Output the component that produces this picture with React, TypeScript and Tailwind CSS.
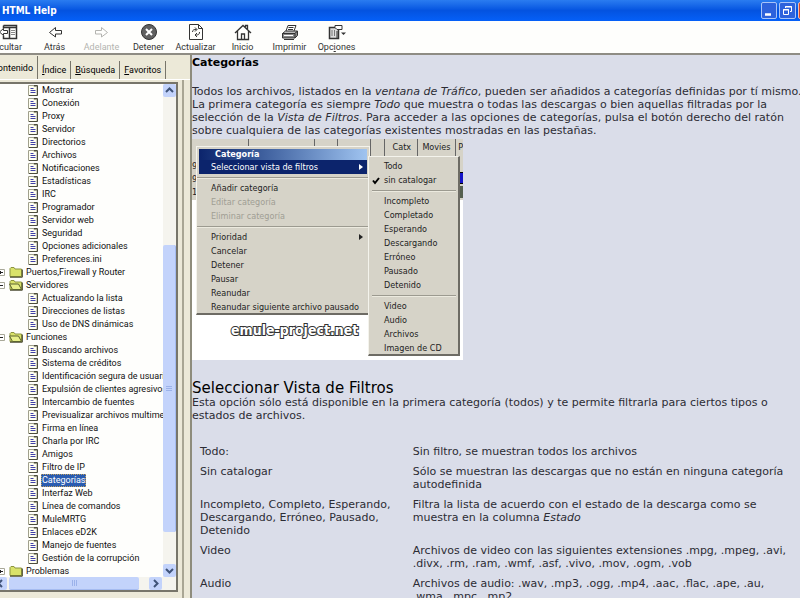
import React from "react";

type TreeItem = {
  label: string;
  kind: "page" | "closed" | "open";
  selected?: boolean;
};

const page = (label: string): TreeItem => ({ label, kind: "page" });

const tree: TreeItem[] = [
  page("Mostrar"),
  page("Conexión"),
  page("Proxy"),
  page("Servidor"),
  page("Directorios"),
  page("Archivos"),
  page("Notificaciones"),
  page("Estadísticas"),
  page("IRC"),
  page("Programador"),
  page("Servidor web"),
  page("Seguridad"),
  page("Opciones adicionales"),
  page("Preferences.ini"),
  { label: "Puertos,Firewall y Router", kind: "closed" },
  { label: "Servidores", kind: "open" },
  page("Actualizando la lista"),
  page("Direcciones de listas"),
  page("Uso de DNS dinámicas"),
  { label: "Funciones", kind: "open" },
  page("Buscando archivos"),
  page("Sistema de créditos"),
  page("Identificación segura de usuarios"),
  page("Expulsión de clientes agresivos"),
  page("Intercambio de fuentes"),
  page("Previsualizar archivos multimedia"),
  page("Firma en línea"),
  page("Charla por IRC"),
  page("Amigos"),
  page("Filtro de IP"),
  { label: "Categorías", kind: "page", selected: true },
  page("Interfaz Web"),
  page("Línea de comandos"),
  page("MuleMRTG"),
  page("Enlaces eD2K"),
  page("Manejo de fuentes"),
  page("Gestión de la corrupción"),
  { label: "Problemas", kind: "closed" },
];

function PageIcon() {
  return (
    <svg className="w-3 h-3 shrink-0" viewBox="0 0 12 12">
      <path d="M.5 1.500h5.500v1h3v9H.5z" fill="#fffff0" stroke="#a0a08c" />
      <path d="M6 1.500h3.500v10H1" fill="none" stroke="#4c4c3c" />
      <path d="M2.500 4.500h3M2.500 6.500h5M2.500 8.500h5" stroke="#4040a8" />
    </svg>
  );
}

function FolderIcon({ open }: { open: boolean }) {
  return (
    <svg className="w-[14px] h-3 shrink-0" viewBox="0 0 14 12">
      <path d="M1 10.5V2.5l1-1h3l1 1.5h6.5v7.5z" fill="#d9e26a" stroke="#8c9440" />
      <path d="M1 11.2h12.3V3.5" fill="none" stroke="#3c3c20" />
      {open && (
        <path d="M.5 5h9l3 5.5H3.5z" fill="#e8f08a" stroke="#5c6430" />
      )}
    </svg>
  );
}

function Expander({ open }: { open: boolean }) {
  return (
    <svg className="w-[5px] h-[9px] shrink-0" viewBox="0 0 5 9">
      <path d="M0 1.5h4.5v6H0" fill="#fff" stroke="#a8a898" />
      <path d="M0 4.5h3" stroke="#222" />
      {!open && <path d="M.5 3v3" stroke="#222" />}
    </svg>
  );
}

function TreeRow({ item }: { item: TreeItem }) {
  if (item.kind === "page") {
    return (
      <li className="flex items-center h-[13px] pl-7 whitespace-nowrap">
        <PageIcon />
        <a
          href="#"
          className={
            item.selected
              ? "ml-px px-px leading-[13px] bg-[#2a5cb0] text-white outline outline-dotted outline-1 -outline-offset-1 outline-[#c0a060]"
              : "ml-px px-px leading-[13px]"
          }
        >
          {item.label}
        </a>
      </li>
    );
  }
  const open = item.kind === "open";
  return (
    <li className="flex items-center h-[13px] whitespace-nowrap">
      <Expander open={open} />
      <span className="w-1" />
      <FolderIcon open={open} />
      <a href="#" className="ml-[3px] leading-[13px]">
        {item.label}
      </a>
    </li>
  );
}

const arrows = {
  up: "M3 8l3.5-3.5L10 8",
  down: "M3 5l3.5 3.5L10 5",
  left: "M8 3L4.500 6.500 8 10",
  right: "M5 3l3.500 3.500L5 10",
};

function ScrollButton({ dir }: { dir: keyof typeof arrows }) {
  return (
    <button
      aria-label={dir}
      className="w-[13px] h-[13px] shrink-0 rounded-xs bg-[#c3d3fb]"
    >
      <svg viewBox="0 0 13 13">
        <path d={arrows[dir]} fill="none" stroke="#3f5378" strokeWidth="2" />
      </svg>
    </button>
  );
}

function Sidebar() {
  return (
    <aside className="flex flex-col w-[192px] shrink-0 bg-[#ece9d8] border-r-2 border-[#8e8c7c] font-[Roboto,sans-serif] text-[9px]">
      <div className="flex items-end h-6 leading-4" role="tablist">
        <button className="h-[23px] -ml-2 pr-1 pt-0.5 border-r border-[#77756a]">
          Contenido
        </button>
        <button className="h-[18px] px-1 border-r border-[#77756a]">
          <u>Í</u>ndice
        </button>
        <button className="h-[18px] px-1 border-r border-[#77756a]">
          <u>B</u>úsqueda
        </button>
        <button className="h-[18px] px-1 border-r border-[#77756a]">
          <u>F</u>avoritos
        </button>
      </div>
      <div className="flex grow min-h-0 border-t border-white">
        <div className="flex flex-col grow min-w-0 pt-0.5 pr-1 pb-1.5 border-r-2 border-[#a9a694]">
          <div className="flex flex-col grow min-h-0 border-t-2 border-r-2 border-b-2 border-[#77756a] bg-[#fefefc]">
            <div className="flex grow min-h-0">
              <ul className="grow min-w-0 overflow-hidden text-[#111]">
                {tree.map((item) => (
                  <TreeRow key={item.label} item={item} />
                ))}
              </ul>
              <div className="flex flex-col w-[13px] shrink-0 bg-[#f5f4ee]">
                <ScrollButton dir="up" />
                <div className="grow-[150]" />
                <div className="flex flex-col items-center justify-center gap-px grow-[285] rounded-xs bg-[#c3d3fb] border-r border-[#a5bbf0]">
                  <span className="w-1.5 h-px bg-[#9bb2ea]" />
                  <span className="w-1.5 h-px bg-[#9bb2ea]" />
                  <span className="w-1.5 h-px bg-[#9bb2ea]" />
                </div>
                <div className="grow-[32]" />
                <ScrollButton dir="down" />
              </div>
            </div>
            <div className="flex h-[13px] shrink-0 pr-[14px] bg-[#f5f4ee]">
              <span className="-ml-1.5 flex">
                <ScrollButton dir="left" />
              </span>
              <div className="flex items-center justify-center gap-px grow-[130] ml-0.5 rounded-xs bg-[#c3d3fb] border-b border-[#a5bbf0]">
                <span className="w-px h-1.5 bg-[#9bb2ea]" />
                <span className="w-px h-1.5 bg-[#9bb2ea]" />
                <span className="w-px h-1.5 bg-[#9bb2ea]" />
              </div>
              <div className="grow-[10]" />
              <ScrollButton dir="right" />
            </div>
          </div>
        </div>
        <div className="w-1.5 shrink-0" />
      </div>
    </aside>
  );
}

function ToolButton({
  label,
  disabled,
  children,
}: {
  label: React.ReactNode;
  disabled?: boolean;
  children: React.ReactNode;
}) {
  return (
    <button
      disabled={disabled}
      className={
        disabled
          ? "flex flex-col items-center w-[47px] shrink-0 text-[#b4b4b0]"
          : "flex flex-col items-center w-[47px] shrink-0 text-[#333]"
      }
    >
      <svg
        className="w-5 h-[18px]"
        viewBox="0 0 20 18"
        fill="none"
        stroke="currentColor"
      >
        {children}
      </svg>
      <span className="leading-3">{label}</span>
    </button>
  );
}

function Toolbar() {
  return (
    <nav className="flex h-[34px] shrink-0 -ml-4 pt-0.5 bg-[#fefefc] border-b-2 border-[#8e8c84] overflow-hidden font-[Roboto,sans-serif] text-[9px]">
      <ToolButton label="Ocultar">
        <path d="M5.500 2.500h13v13h-13v-3M5.500 5.500v-3M5 4.500h13M11.500 4v11" strokeWidth="1.500" />
        <path d="M13 7.500h4M13 9.500h4M13 11.500h4" stroke="#888" />
        <path d="M9.500 7.500h-4v-2l-4 3.500 4 3.500v-2h4z" fill="#fff" />
      </ToolButton>
      <ToolButton label="Atrás">
        <path d="M16.500 7.500h-6v-3L4.500 9.500l6 4.500v-3h6z" />
      </ToolButton>
      <ToolButton label="Adelante" disabled>
        <path d="M3.500 7.500h6v-3l6 5-6 4.500v-3h-6z" />
      </ToolButton>
      <ToolButton label="Detener">
        <circle cx="10" cy="9" r="7.500" fill="#606060" />
        <path d="M7 6l6 6M13 6l-6 6" stroke="#fff" strokeWidth="2" />
      </ToolButton>
      <ToolButton label="Actualizar">
        <path d="M3.500 1.500h9l4 4v11h-13zM12.500 1.500v4h4" />
        <path d="M6.500 9c0-2.500 2-2.500 4-2.500M9 4.500l2 2-2 2M13.500 9c0 3-2 3-4 3M11 10l-2 2 2 2" />
      </ToolButton>
      <ToolButton label="Inicio">
        <path d="M2 10l8-7.500 8 7.500M4.500 8v8.500h11V8M14.500 6V2.500h-2V4M8.500 16v-5h3v5" strokeWidth="1.300" />
      </ToolButton>
      <ToolButton label="Imprimir">
        <path d="M6 8l2-5.500h8L14 8" fill="#fff" />
        <path d="M8.500 4.500h5M8 6.500h5" />
        <path d="M2.500 10.500L5.500 8h12l-2.500 2.500z" fill="#bbb" />
        <path d="M2.500 10.500h12.500v4.500H2.500zM15 10.500L17.500 8v4.500L15 15" fill="#888" />
        <path d="M4 12.500h9" stroke="#fff" />
        <path d="M4 16.500h10" />
      </ToolButton>
      <ToolButton
        label={
          <>
            Opc<u>i</u>ones
          </>
        }
      >
        <path d="M2.500 4.500h9v11h-9z" fill="#ddd" strokeWidth="1.500" />
        <path d="M5 7v6M7.500 7v6" stroke="#777" />
        <path d="M8 2.500h7v4h-5L8 4.500z" fill="#fff" />
        <path d="M10 8v7" />
        <path d="M14 9.500h5l-2.500 2.500z" fill="currentColor" stroke="none" />
      </ToolButton>
    </nav>
  );
}

function TitleBar() {
  return (
    <header className="flex items-center justify-between h-[21px] shrink-0 pl-0.5 overflow-hidden bg-linear-to-b from-[#2a7cf0] via-[#0453e0] to-[#0560f8] text-white">
      <h1 className="font-['DejaVu_Sans_Condensed'] text-[10px] font-bold">
        HTML Help
      </h1>
      <div className="flex gap-0.5 -mr-[14px]">
        <button
          aria-label="Minimizar"
          className="w-4 h-[17px] rounded-xs border border-[#a8c4f8] bg-[#2d62dc]"
        >
          <svg viewBox="0 0 14 15">
            <path d="M3 11.500h6" stroke="#fff" strokeWidth="2.500" />
          </svg>
        </button>
        <button
          aria-label="Restaurar"
          className="w-[17px] h-[17px] rounded-xs border border-[#a8c4f8] bg-[#2d62dc]"
        >
          <svg viewBox="0 0 15 15" fill="none" stroke="#fff">
            <path d="M5.500 5V3.500h6v5H10M5 4h7" />
            <path d="M3.500 6.500h5v5h-5zM3 7h6" />
          </svg>
        </button>
        <button
          aria-label="Cerrar"
          className="w-4 h-[17px] rounded-xs border border-[#f0c0b0] bg-[#d8482c]"
        />
      </div>
    </header>
  );
}

const separator =
  "h-[2px] mt-[3px] mb-0.5 -mx-0.5 border-t border-[#9c9a90] border-b border-b-[#eceadf]";

function MenuScreenshot() {
  return (
    <figure className="relative w-[271px] h-[221px] mt-0.5 overflow-hidden bg-white text-[#222] font-['DejaVu_Sans_Condensed'] text-[9px]">
      <div className="flex h-[17px] bg-[#d6d3c8] leading-[17px]">
        <span className="w-[57px] border-r border-[#666]" />
        <span className="w-[67px] border-r border-[#666]" />
        <span className="w-[23px] border-r border-[#666]" />
        <span className="w-[33px] border-r border-[#666]" />
        <span className="w-[14px] border-r border-[#666]" />
        <span className="w-[34px] pl-2 border-r border-[#666]">Catx</span>
        <span className="w-[38px] pl-1 border-r border-[#666]">Movies</span>
        <span className="pl-0.5">P</span>
      </div>
      <div className="h-[44px] pt-1 bg-[#d6d3c8] leading-[13px]">
        <p>9</p>
        <p>9</p>
        <p>1</p>
      </div>
      <div className="absolute right-0 top-[33px] w-1 h-3 bg-[#1414c8] border-y border-black" />
      <div className="absolute right-0 top-[47px] w-1 h-3 bg-[#55604f]" />

      <div className="absolute left-1 top-[7px] w-[174px] h-[169px] p-0.5 bg-[#d6d3c8] border border-[#f4f3ec] border-b-2 border-b-[#6d6b64] leading-[14px]">
        <p className="h-[11px] pl-4 bg-linear-to-r from-[#0c246c] to-[#a0c4f0] font-bold leading-[11px] text-white">
          Categoría
        </p>
        <p className="flex justify-between pl-3 pr-1 bg-[#0c246c] text-white">
          Seleccionar vista de filtros
          <Caret />
        </p>
        <div className={separator} />
        <div className="pl-3">
          <p>Añadir categoría</p>
          <p className="text-[#a09e94]">Editar categoría</p>
          <p className="text-[#a09e94]">Eliminar categoría</p>
        </div>
        <div className={separator} />
        <div className="pl-3">
          <p className="flex justify-between pr-1">
            Prioridad
            <Caret />
          </p>
          <p>Cancelar</p>
          <p>Detener</p>
          <p>Pausar</p>
          <p>Reanudar</p>
          <p className="whitespace-nowrap">Reanudar siguiente archivo pausado</p>
        </div>
      </div>

      <div className="absolute left-44 top-[17px] w-[92px] h-[200px] pt-0.5 pl-[15px] pr-0.5 bg-[#d6d3c8] border border-[#f4f3ec] border-r-2 border-b-2 border-r-[#6d6b64] border-b-[#6d6b64] leading-[14px]">
        <p>Todo</p>
        <p className="relative">
          <svg className="absolute -left-3 top-1 w-2 h-2" viewBox="0 0 8 8">
            <path d="M1 3.500l2 2.500 4-5" fill="none" stroke="#000" strokeWidth="2" />
          </svg>
          sin catalogar
        </p>
        <div className="h-[2px] mt-[3px] mb-0.5 -ml-3 border-t border-[#9c9a90] border-b border-b-[#eceadf]" />
        <p>Incompleto</p>
        <p>Completado</p>
        <p>Esperando</p>
        <p>Descargando</p>
        <p>Erróneo</p>
        <p>Pausado</p>
        <p>Detenido</p>
        <div className="h-[2px] mt-[3px] mb-0.5 -ml-3 border-t border-[#9c9a90] border-b border-b-[#eceadf]" />
        <p>Video</p>
        <p>Audio</p>
        <p>Archivos</p>
        <p>Imagen de CD</p>
      </div>

      <figcaption className="absolute left-[39px] top-[183px] text-sm leading-4 font-bold text-white [-webkit-text-stroke:2px_#333] [paint-order:stroke_fill]">
        emule-project.net
      </figcaption>
    </figure>
  );
}

function Caret() {
  return (
    <svg className="w-1 h-[14px]" viewBox="0 0 4 14" fill="currentColor">
      <path d="M0 4l4 3-4 3z" />
    </svg>
  );
}

const filters: { name: string; text: React.ReactNode }[] = [
  { name: "Todo:", text: "Sin filtro, se muestran todos los archivos" },
  {
    name: "Sin catalogar",
    text: "Sólo se muestran las descargas que no están en ninguna categoría autodefinida",
  },
  {
    name: "Incompleto, Completo, Esperando, Descargando, Erróneo, Pausado, Detenido",
    text: (
      <>
        Filtra la lista de acuerdo con el estado de la descarga como se muestra
        en la columna <i>Estado</i>
      </>
    ),
  },
  {
    name: "Video",
    text: "Archivos de video con las siguientes extensiones .mpg, .mpeg, .avi, .divx, .rm, .ram, .wmf, .asf, .vivo, .mov, .ogm, .vob",
  },
  {
    name: "Audio",
    text: "Archivos de audio: .wav, .mp3, .ogg, .mp4, .aac, .flac, .ape, .au, .wma, .mpc, .mp2",
  },
];

export default function App() {
  return (
    <div className="flex flex-col h-screen overflow-hidden bg-[#fefefc]">
      <TitleBar />
      <Toolbar />
      <div className="flex grow min-h-0 pb-0.5">
        <Sidebar />
        <main className="grow min-w-0 overflow-hidden bg-[#dadde9] text-[#2c2c34] font-['DejaVu_Sans'] text-[11px] leading-[13px]">
          <h2 className="pt-px font-bold text-black">Categorías</h2>
          <p className="mt-4 -mr-2">
            Todos los archivos, listados en la <i>ventana de Tráfico</i>, pueden
            ser añadidos a categorías definidas por tí mismo. La primera
            categoría es siempre <i>Todo</i> que muestra o todas las descargas o
            bien aquellas filtradas por la selección de la{" "}
            <i>Vista de Filtros</i>. Para acceder a las opciones de categorías,
            pulsa el botón derecho del ratón sobre cualquiera de las categorías
            existentes mostradas en las pestañas.
          </p>
          <MenuScreenshot />
          <h3 className="mt-5 text-[15px] leading-4 text-black">
            Seleccionar Vista de Filtros
          </h3>
          <p>
            Esta opción sólo está disponible en la primera categoría (todos) y te
            permite filtrarla para ciertos tipos o estados de archivos.
          </p>
          <table className="w-full mt-5 table-fixed">
            <tbody>
              {filters.map((f) => (
                <tr key={f.name} className="align-top">
                  <td className="w-[35%] pt-[3px] pb-1 pl-2 pr-2">{f.name}</td>
                  <td className="pt-[3px] pb-1 pl-2 pr-3">{f.text}</td>
                </tr>
              ))}
            </tbody>
          </table>
        </main>
      </div>
    </div>
  );
}
